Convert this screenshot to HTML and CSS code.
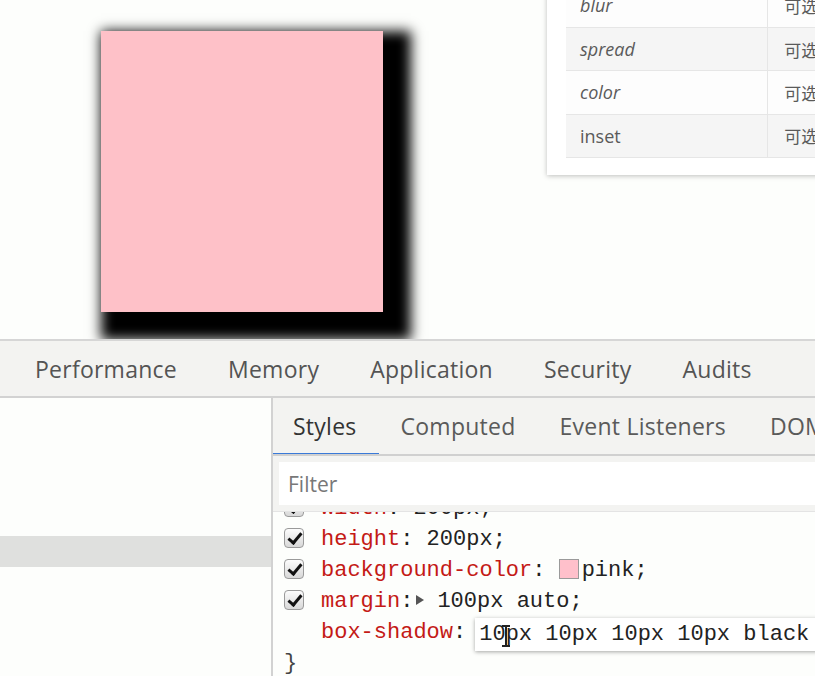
FILE: index.html
```html
<!DOCTYPE html>
<html>
<head>
<meta charset="utf-8">
<link rel="stylesheet" href="styles.css">
</head>
<body>
<div class="page">
  <div class="viewport">
    <div class="box"></div>
    <div class="card">
      <table class="tbl">
        <tr class="r-white"><td class="k it">blur</td><td class="v">可选</td></tr>
        <tr class="r-gray"><td class="k it">spread</td><td class="v">可选</td></tr>
        <tr class="r-white"><td class="k it">color</td><td class="v">可选</td></tr>
        <tr class="r-gray"><td class="k">inset</td><td class="v">可选</td></tr>
      </table>
    </div>
  </div>
  <div class="devtools">
    <div class="maintabs">
      <span class="tab">Performance</span>
      <span class="tab">Memory</span>
      <span class="tab">Application</span>
      <span class="tab">Security</span>
      <span class="tab">Audits</span>
    </div>
    <div class="split">
      <div class="left">
        <div class="selrow"></div>
      </div>
      <div class="right">
        <div class="subtabs">
          <span class="stab active">Styles</span>
          <span class="stab">Computed</span>
          <span class="stab">Event Listeners</span>
          <span class="stab">DOM</span>
        </div>
        <div class="filterbar">
          <div class="filter">Filter</div>
        </div>
        <div class="pane">
          <div class="rule">
            <div class="line"><span class="cb"></span><span class="prop">width</span>: 200px;</div>
            <div class="line"><span class="cb"></span><span class="prop">height</span>: 200px;</div>
            <div class="line"><span class="cb"></span><span class="prop">background-color</span>: <span class="swatch"></span>pink;</div>
            <div class="line"><span class="cb"></span><span class="prop">margin</span>:<span class="tri"></span>100px auto;</div>
            <div class="line"><span class="nocb"></span><span class="prop">box-shadow</span>:<span class="editor">10px 10px 10px 10px black<span class="ibeam"></span></span></div>
            <div class="line brace">}</div>
          </div>
        </div>
      </div>
    </div>
  </div>
</div>
</body>
</html>
```
FILE: styles.css
```css
html, body {
  margin: 0;
  padding: 0;
  background: #fdfefc;
  overflow: hidden;
}
.page {
  width: 815px;
  height: 676px;
  overflow: hidden;
  display: flex;
  flex-direction: column;
}
.viewport {
  height: 339px;
  flex: none;
  position: relative;
  overflow: hidden;
  background: #fdfefc;
}
.box {
  margin-left: 101px;
  margin-top: 31px;
  width: 282px;
  height: 281px;
  background: #fec1c8;
  box-shadow: 14px 14px 12px 14px #000;
}
.card {
  position: absolute;
  left: 547px;
  top: -20px;
  width: 300px;
  height: 195px;
  background: #fff;
  box-shadow: 0 1px 5px rgba(0,0,0,0.25);
  padding: 0 0 0 19px;
  box-sizing: border-box;
}
.tbl {
  border-collapse: collapse;
  font-family: "Open Sans", "Noto Sans CJK SC", sans-serif;
  font-size: 18px;
  color: #5a5a5a;
  margin-top: 4px;
}
.tbl td {
  height: 43.4px;
  padding: 0 0 0 14px;
  border-bottom: 1px solid #e6e6e6;
  box-sizing: border-box;
}
.tbl .k { width: 204px; border-right: 1px solid #e6e6e6; }
.tbl .v { width: 80px; padding-left: 16px; font-size: 17px; }
.it { font-style: italic; }
.r-white td { background: #fdfdfd; }
.r-gray td { background: #f5f5f5; }

.devtools {
  flex: 1;
  display: flex;
  flex-direction: column;
  border-top: 2px solid #d6d6d6;
  font-family: "Open Sans", "Noto Sans", sans-serif;
}
.maintabs {
  height: 55px;
  flex: none;
  background: #f3f3f1;
  border-bottom: 2px solid #d2d2d2;
  display: flex;
  align-items: center;
  padding-left: 35px;
  gap: 51px;
  font-size: 23px;
  letter-spacing: 0.25px;
  color: #545454;
  white-space: nowrap;
}
.split {
  flex: 1;
  display: flex;
}
.left {
  width: 273px;
  flex: none;
  background: #fdfefc;
  border-right: 2px solid #d2d2d2;
  padding-top: 138px;
  box-sizing: border-box;
}
.selrow {
  height: 31px;
  background: #dfe0de;
}
.right {
  flex: 1;
  display: flex;
  flex-direction: column;
  background: #fdfefc;
  min-width: 0;
}
.subtabs {
  height: 56px;
  flex: none;
  background: #f3f3f1;
  border-bottom: 2px solid #d0d0d0;
  display: flex;
  align-items: stretch;
  font-size: 23px;
  letter-spacing: 0.25px;
  color: #5a5a5a;
  white-space: nowrap;
  overflow: hidden;
}
.stab {
  display: flex;
  align-items: center;
  padding: 0 22px 0 22px;
  margin-bottom: -2px;
  border-bottom: 3px solid transparent;
}
.stab.active {
  color: #333;
  border-bottom-color: #3a7ad8;
  padding-left: 20px;
}
.filterbar {
  height: 55px;
  flex: none;
  background: #f3f3f1;
  padding: 6px 0 6px 6px;
  box-sizing: border-box;
  display: flex;
}
.filter {
  flex: 1;
  background: #fff;
  display: flex;
  align-items: center;
  padding-left: 9px;
  font-size: 21px;
  color: #787878;
}
.pane {
  flex: 1;
  overflow: hidden;
  border-top: 1px solid #e4e4e4;
  font-family: "Liberation Mono", "DejaVu Sans Mono", monospace;
  font-size: 22px;
  color: #222;
}
.rule {
  margin-top: -19px;
  padding-left: 11px;
}
.line {
  height: 31px;
  line-height: 31px;
  white-space: nowrap;
}
.cb {
  display: inline-block;
  vertical-align: middle;
  width: 20px;
  height: 20px;
  border: 1px solid #9a9a9a;
  border-radius: 4px;
  background: linear-gradient(#fcfcfc, #d8d8d8);
  margin: -3px 17px 0 0;
  box-sizing: border-box;
  position: relative;
}
.cb::after {
  content: "";
  position: absolute;
  left: 6px;
  top: 1px;
  width: 5px;
  height: 11px;
  border-right: 3px solid #111;
  border-bottom: 3px solid #111;
  transform: rotate(40deg);
}
.nocb {
  display: inline-block;
  width: 20px;
  margin-right: 17px;
}
.prop { color: #c41a16; }
.swatch {
  display: inline-block;
  vertical-align: middle;
  width: 20px;
  height: 20px;
  background: #ffc0cb;
  border: 1px solid #9a9a9a;
  box-sizing: border-box;
  margin: -3px 3px 0 0;
}
.tri {
  display: inline-block;
  vertical-align: middle;
  width: 0;
  height: 0;
  border-left: 8px solid #555;
  border-top: 5px solid transparent;
  border-bottom: 5px solid transparent;
  margin: -3px 13px 0 3px;
}
.editor {
  display: inline-block;
  vertical-align: top;
  margin-left: 9px;
  height: 33px;
  line-height: 33px;
  padding: 0 200px 0 4px;
  background: #fff;
  box-shadow: 0 1px 4px rgba(0,0,0,0.35);
  position: relative;
  margin-top: 1px;
}
.ibeam {
  position: absolute;
  left: 30px;
  top: 7px;
  width: 2px;
  height: 22px;
  background: #222;
}
.ibeam::before, .ibeam::after {
  content: "";
  position: absolute;
  left: -3px;
  width: 8px;
  height: 2px;
  background: #222;
}
.ibeam::before { top: 0; }
.ibeam::after { bottom: 0; }
.brace { color: #444; }
```
